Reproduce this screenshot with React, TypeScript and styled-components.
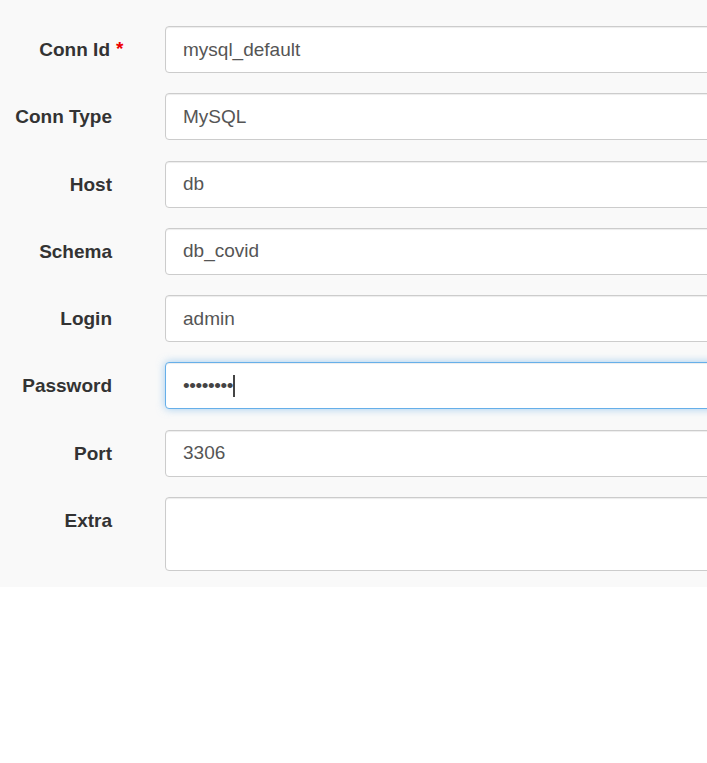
import styled, { createGlobalStyle } from "styled-components";

const GlobalStyle = createGlobalStyle`
  html, body {
    margin: 0;
    padding: 0;
    background: #fff;
    overflow: hidden;
  }
  body {
    font-family: "Liberation Sans", Arial, sans-serif;
    color: #333;
  }
`;

const Panel = styled.form`
  background: #f9f9f9;
  padding: 26px 0 16px;
  display: flex;
  flex-direction: column;
  gap: 20.3px;
  width: 100%;
  overflow: hidden;
`;

const Row = styled.div`
  display: grid;
  grid-template-columns: 112px 640px;
  column-gap: 53px;
  align-items: start;
`;

const Label = styled.label<{ $required?: boolean }>`
  position: relative;
  justify-self: end;
  padding-top: 12px;
  padding-right: ${(p) => (p.$required ? "2px" : "0")};
  font-size: 19px;
  font-weight: bold;
  line-height: 24px;
  white-space: nowrap;
`;

const Required = styled.span`
  position: absolute;
  left: calc(100% + 4px);
  top: 11px;
  color: #e00;
  font-weight: bold;
`;

const Input = styled.div<{ $focused?: boolean; $tall?: boolean }>`
  box-sizing: border-box;
  height: ${(p) => (p.$tall ? "74px" : "47px")};
  padding: 0 17px;
  display: flex;
  align-items: ${(p) => (p.$tall ? "flex-start" : "center")};
  font-size: 19px;
  color: #555;
  background: #fff;
  border: 1px solid ${(p) => (p.$focused ? "#66afe9" : "#ccc")};
  border-radius: 4px;
  box-shadow: ${(p) =>
    p.$focused
      ? "inset 0 1px 1px rgba(0,0,0,.075), 0 0 8px rgba(102,175,233,.6)"
      : "inset 0 1px 1px rgba(0,0,0,.075)"};
`;

const Dots = styled.span`
  font-size: 19px;
  letter-spacing: -0.4px;
  color: #444;
`;

const Caret = styled.span`
  display: inline-block;
  width: 2px;
  height: 22px;
  background: #444;
`;

const fields = [
  { label: "Conn Id", value: "mysql_default", required: true },
  { label: "Conn Type", value: "MySQL" },
  { label: "Host", value: "db" },
  { label: "Schema", value: "db_covid" },
  { label: "Login", value: "admin" },
];

export default function App() {
  return (
    <>
      <GlobalStyle />
      <Panel>
        {fields.map((f) => (
          <Row key={f.label}>
            <Label $required={f.required}>
              {f.label}
              {f.required && <Required>*</Required>}
            </Label>
            <Input>{f.value}</Input>
          </Row>
        ))}
        <Row>
          <Label>Password</Label>
          <Input $focused>
            <Dots>••••••••</Dots>
            <Caret />
          </Input>
        </Row>
        <Row>
          <Label>Port</Label>
          <Input>3306</Input>
        </Row>
        <Row>
          <Label>Extra</Label>
          <Input $tall />
        </Row>
      </Panel>
    </>
  );
}
